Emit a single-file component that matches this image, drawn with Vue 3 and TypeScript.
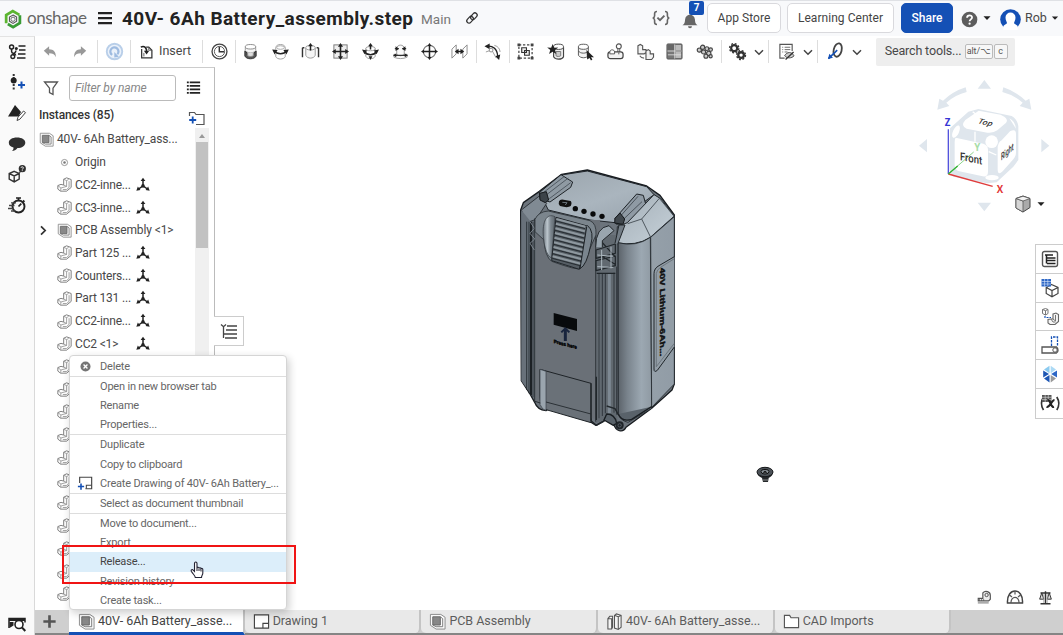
<script setup lang="ts">
import { h, type FunctionalComponent } from 'vue'

const glyphs: Record<string, string> = {
  logo: '<path d="M3 13.5V5.8L9.3 2l6.2 3.6" stroke="#5cb531" stroke-width="2.6"/><path d="M16 6v7.3l-6.4 3.9-5-3" stroke="#3a9b35" stroke-width="2.6"/><path d="m9.5 5.7 3.4 2v3.9l-3.4 2-3.4-2V7.7z" stroke="#555" stroke-width="1"/><circle cx="9.5" cy="9.7" r="2" stroke="#666" stroke-width=".9"/>',
  menu: '<path d="M2 4.2h14M2 9.2h14M2 14.2h14" stroke="#222" stroke-width="2.2"/>',
  link: '<g transform="rotate(-48 9 9)" stroke="#333" stroke-width="1.4"><rect x="1.800" y="6.200" width="8.500" height="5" rx="2.500"/><rect x="7.600" y="6.800" width="8.500" height="5" rx="2.500"/></g>',
  braces: '<path d="M5 2.5c-2 0-2.4.7-2.4 2.2v2.1c0 1.4-.5 1.9-1.8 2.2 1.3.3 1.8.8 1.8 2.2v2.1c0 1.5.4 2.2 2.4 2.2M13 2.5c2 0 2.4.7 2.4 2.2v2.1c0 1.4.5 1.9 1.8 2.2-1.3.3-1.8.8-1.8 2.2v2.1c0 1.5-.4 2.2-2.4 2.2" stroke="#666" stroke-width="1.6"/><path d="m5.4 8.6 2.6 2.6 4.4-4.6" stroke="#666" stroke-width="1.9"/>',
  bell: '<path d="M1.500 14.200c2.600-1.500 2.300-3.600 2.600-6C4.500 5.300 6.500 3.700 9 3.700s4.500 1.600 4.900 4.500c.3 2.400 0 4.500 2.600 6z" fill="#666"/><path d="M7 15.200h4a2 2 0 0 1-4 0z" fill="#666"/>',
  help: '<circle cx="9" cy="9" r="8.300" fill="#5d5d5d"/><path d="M6.400 7.200C6.400 3.600 11.800 3.800 11.700 7c0 1.900-2.600 1.900-2.600 3.900" stroke="#fff" stroke-width="1.900"/><circle cx="9.100" cy="13.400" r="1.200" fill="#fff"/>',
  user: '<circle cx="10.500" cy="10.500" r="10.300" fill="#1450b5"/><path d="M5.500 8.500a5 5 0 0 1 10 0c0 3-1.500 4.500-1.500 5.700 1 1.300 3.300 1.700 3.700 3v4.300H3.300v-4.300c.4-1.300 2.700-1.700 3.700-3C7 13 5.500 11.500 5.500 8.500z" fill="#fff"/>',
  caret: '<path d="M5.500 7.200h7L9 10.900z" fill="#222"/>',
  chevron: '<path d="m5 7.200 4 4 4-4" stroke="#444" stroke-width="1.500"/>',
  right: '<path d="m6 4 5 5-5 5" stroke="#333" stroke-width="2.100"/>',
  versions: '<circle cx="3.600" cy="4" r="2" stroke="#222" stroke-width="1.500"/><path d="M3.600 6v2.500c0 3 4 .8 4 4M8 7.500c-.3 3-2.500 2-3 4.500" stroke="#222" stroke-width="1.500"/><circle cx="8.300" cy="5.500" r="1.500" fill="#222"/><circle cx="4.800" cy="13.600" r="1.900" stroke="#222" stroke-width="1.400"/><path d="M10.500 3h7M11 7h6.500M10 11h7.500M9 15h8.500" stroke="#222" stroke-width="1.600"/>',
  addnode: '<path d="M5.700 0v2M5.700 3v1M5.700 10v7" stroke="#333" stroke-width="2" stroke-dasharray="2 1.500"/><circle cx="5.700" cy="6.500" r="3" fill="#222"/><path d="M13.500 7.500v7M10 11h7" stroke="#1450b5" stroke-width="2"/>',
  tripencil: '<path d="M7 1 0 12.500h10.500L13 8z" fill="#222"/><path d="m9 16.500 1-3.300L15.500 7l2 1.600-5.600 6.600z" fill="#fff" stroke="#444"/>',
  bubble: '<path d="M9 2.500c5 0 8.300 2.200 8.300 5.200S14 13 9.500 13c-1.300 2-3.500 3-5.500 3 1.100-1 1.600-2.200 1.500-3.600C2.500 11.600.8 10.100.8 7.700.8 4.700 4 2.500 9 2.500z" fill="#303030"/>',
  cubehelp: '<path d="m6.200 6.300 5 2.200v5.600l-5 2.800-5-2.800V8.500zM1.200 8.500l5 2.400 5-2.400M6.200 11v5.900" stroke="#333" stroke-width="1.400"/><path d="m11 7.500 2-1" stroke="#333" stroke-width="1.200"/><circle cx="14.300" cy="3.700" r="3.600" fill="#303030"/><path d="M13 2.900c.2-1.600 2.600-1.300 2.400.1-.2.800-1 .7-1.100 1.600M14.300 5.300v.8" stroke="#fff" stroke-width=".9"/>',
  stopwatch: '<circle cx="10.500" cy="10.500" r="6" stroke="#222" stroke-width="1.900"/><path d="M8 2h5M10.500 2v2.500M15 4.500l1.500 1.300M10.500 10.500l2.800-2.800" stroke="#222" stroke-width="1.700"/><path d="M3 6.800h5M1 9.500h5.500M0 12.500h6M3 15h4" stroke="#444" stroke-width="1.300"/>',
  camera: '<path d="M1 14V4.500h16v4" stroke="#222" stroke-width="1.500"/><path d="M1 4.500h16V7H1z" fill="#222"/><path d="M1.500 8h4v3.500L1.500 14z" fill="#222"/><circle cx="11" cy="10.500" r="4" fill="#fff" stroke="#222" stroke-width="1.600"/><path d="m14 13.500 3.300 3.500" stroke="#222" stroke-width="2"/>',
  undo: '<path d="M2 7.700 8 2.500V6c5 .1 7.700 2.800 7.600 8.800-1.500-3.300-3.700-4.300-7.600-4.300v2.800z" fill="#999"/>',
  redo: '<path d="M16 7.700 10 2.500V6c-5 .1-7.700 2.800-7.600 8.800 1.500-3.300 3.700-4.300 7.600-4.300v2.800z" fill="#999"/>',
  update: '<circle cx="9" cy="9" r="8.200" fill="#eaf1fa" stroke="#b9cfe9" stroke-width="2"/><path d="M6.500 12.600A4.300 4.300 0 1 1 12 12" stroke="#9ebbe0" stroke-width="2.400"/><path d="M8.800 9.500v5.800l4.700-.8z" fill="#9ebbe0"/>',
  insert: '<path d="M3 5.500v10h11.500V7L11 3.500H8" stroke="#333" stroke-width="1.400"/><path d="M11 3.500V7h3.500M5.500 10v4" stroke="#555"/><path d="M2 3.500c4-2 6.500.5 6.500 5" stroke="#222" stroke-width="1.700"/><path d="M5.500 7.500h6l-3 4.300z" fill="#222"/>',
  mategroup: '<circle cx="9" cy="9" r="7.900" stroke="#444" stroke-width="1.400"/><circle cx="9" cy="9" r="5.400" stroke="#555"/><path d="M8.800 4v5.200H14" stroke="#333" stroke-width="1.500"/>',
  fasten: '<path d="M3.500 4v4c1.200 3 9.800 3 11 0V4" fill="#f4f4f4" stroke="#999"/><ellipse cx="9" cy="4" rx="5.500" ry="2.400" fill="#fff" stroke="#888"/><path d="M3 8.500v5.200c1.500 4 10.500 4 12 0V8.500l-2.500 2.200v2H5.500v-2z" fill="#555" stroke="#333"/><path d="M6 10v3.500c1.500 1 4.500 1 6 0V10" fill="#ddd" stroke="#888"/>',
  revolute: '<path d="M4 7V5c0-4.500 10-4.500 10 0v2M4 11.500v3c1.500 3.300 8.500 3.300 10 0v-3" stroke="#999"/><ellipse cx="9" cy="4.800" rx="4" ry="1.900" stroke="#aaa"/><path d="M2.500 8.500c3 3.800 10 3.800 13 0" stroke="#222" stroke-width="1.700"/><path d="M6 7.500.2 7l2.600 5.200zM12 7.500l5.800-.5-2.600 5.200z" fill="#222"/>',
  slider: '<path d="M4 5v8c1.500 4 8.500 4 10 0V5" fill="#f6f6f6" stroke="#999"/><ellipse cx="9" cy="5" rx="5" ry="2.300" fill="#fff" stroke="#999"/><path d="M.5 5v10M17.500 5v10M2.500 5h-2M17.500 5h-2" stroke="#333" stroke-width="1.500"/><path d="M9 8V2" stroke="#222" stroke-width="1.600"/><path d="m6.500 3.500 2.500-3.500 2.500 3.500z" fill="#222"/>',
  planar: '<rect x="2" y="2" width="14" height="14" fill="#eee" stroke="#777"/><path d="M9 2v14M2 9h14" stroke="#222" stroke-width="1.700"/><path d="m9 0 2.700 4H6.300zm0 18-2.700-4h5.400zM0 9l4-2.700v5.400zm18 0-4 2.700V6.300z" fill="#222"/>',
  cylindrical: '<path d="M4 6v8c1.500 3.500 8.500 3.500 10 0V6" stroke="#999"/><ellipse cx="9" cy="6" rx="5" ry="2.200" stroke="#999"/><path d="M2.500 9c3 4.500 10 4.500 13 0M9 2v5" stroke="#222" stroke-width="1.600"/><path d="M5.500 8 0 7l2.600 5zM12.500 8l5.500-1-2.600 5zM6.500 3.500 9 0l2.500 3.500zM7 14h4l-2 4z" fill="#222"/>',
  pinslot: '<path d="M5 13V6c0-5 8-5 8 0v7M2 12h3c2 2 6 2 8 0h3v3c-3 2-11 2-14 0z" fill="#fafafa" stroke="#999"/><path d="M3 6h4M11 6h4M3 13h12" stroke="#333" stroke-width="1.300"/><path d="m7.500 6-3.700-2.500v5zM10.500 6l3.700-2.500v5zM1 13l3.500-2v4zm16 0-3.500-2v4z" fill="#222"/>',
  ball: '<circle cx="9" cy="9" r="6.500" stroke="#777" stroke-width="1.200"/><path d="M9 2v14M2 9h14" stroke="#222" stroke-width="1.600"/><path d="m9 0 2.200 3.200H6.800zm0 18-2.200-3.200h4.400zM0 9l3.200-2.200v4.400zm18 0-3.200 2.200V6.800z" fill="#222"/>',
  parallel: '<path d="M1 6.500 5.500 2v9.500L1 16zM12.500 6.500 17 2v9.500L12.500 16z" stroke="#888"/><path d="M5.500 9h7" stroke="#222" stroke-width="1.500"/><path d="m4 9 4-2.800v5.600zm10 0-4-2.800v5.600z" fill="#222"/>',
  tangent: '<path d="M3 3.500C9 2.500 14 6 14.500 14" stroke="#222" stroke-width="1.400"/><path d="M.5 3.500 6 .5v6zM16 18l1.200-5.700-5.400 1.700z" fill="#222"/><path d="M2 9.500 9 7M8 7l5 9M11 2.500c4 1 6 4 6 7" stroke="#999"/><circle cx="7.500" cy="7.500" r="2" fill="#fff" stroke="#888"/>',
  group: '<rect x="2" y="2" width="14" height="14" stroke="#444" stroke-width="1.300" stroke-dasharray="2.500 1.800"/><path d="M.500.500h3v3h-3zM14.500.500h3v3h-3zM.500 14.500h3v3h-3zM14.500 14.500h3v3h-3z" fill="#444"/><path d="M5 5h5v5H5zM8 8h5v5H8z" fill="#eee" stroke="#333" stroke-width="1.200"/>',
  starcube: '<path d="M7 4.500v10c2 3.500 9 3.500 10.500 0v-10" fill="#eee" stroke="#444" stroke-width="1.200"/><ellipse cx="12.200" cy="4" rx="5.300" ry="2.800" fill="#fff" stroke="#444"/><path d="M9.500 9h5v4.500c-1 1-4 1-5 0z" fill="#ccc" stroke="#777"/><path d="m6 1 1.600 3.900 4.200-.1-3.300 2.700 1.300 4.200L6 9.200l-3.800 2.500 1.300-4.200L.2 4.800l4.200.1z" fill="#222"/>',
  pickcube: '<path d="M1.500 4v9c2 3.500 9 3.500 10.500 0V4M1.500 8.500c2 3 8.500 3 10.500 0" fill="#f2f2f2" stroke="#555"/><ellipse cx="6.800" cy="4" rx="5.300" ry="2.700" fill="#fff" stroke="#555"/><path d="m10 7.500 8 7.500-3.200.1 1.500 2.500-1.500.9-1.500-2.700-2.500 1.700z" fill="#222"/>',
  snap: '<circle cx="12.500" cy="3.500" r="2.600" stroke="#555" stroke-width="1.200"/><path d="M11.500 6v3.500M13.500 6v3.500" stroke="#555"/><rect x="1" y="9.500" width="16" height="7" rx="2.500" fill="#f2f2f2" stroke="#444" stroke-width="1.300"/><path d="M3 9.500c0-3 5-3 5 0v2H3z" fill="#fff" stroke="#555"/><path d="M12.500 10v2" stroke="#555"/>',
  replicate: '<path d="M1 3 3.500 1.500 6 3v4h3.500v3l-2 1.500H1zM9.500 8.500 12 7l2 1.500v3h3.500v3.500l-2 2.500h-6z" fill="#f2f2f2" stroke="#555" stroke-width="1.200"/><path d="M3 13.500c1 2 2.500 2.500 4.500 2.500" stroke="#666" stroke-width="1.200"/>',
  pattern: '<rect x="1" y="1" width="16" height="16" rx="1" fill="#777" stroke="#555"/><path d="M2 2h6.500v5.500H2z" fill="#666"/><path d="M10 2h6v5.500h-6zM10 9.500h6V16h-6z" fill="#bbb"/><path d="M1.500 8.500h15M9.200 1.500v15M2 12.500h14" stroke="#ddd" stroke-width=".9"/>',
  circular: '<g fill="#ccc" stroke="#444" stroke-width="1.200"><circle cx="3.500" cy="7.500" r="2.200"/><circle cx="7" cy="4.500" r="2.200"/><circle cx="11.500" cy="6" r="2"/><circle cx="15.500" cy="7" r="1.900"/><circle cx="8" cy="9.500" r="2.200"/><circle cx="13.500" cy="11" r="2.300"/><circle cx="10.500" cy="14" r="2.100"/><circle cx="15.500" cy="14" r="1.700"/></g>',
  gears: '<circle cx="5.500" cy="5.500" r="3.200" stroke="#333" stroke-width="2.400"/><circle cx="5.500" cy="5.500" r="4.900" stroke="#333" stroke-width="1.400" stroke-dasharray="2 1.850"/><circle cx="12.800" cy="12.800" r="3" stroke="#333" stroke-width="2.400"/><circle cx="12.800" cy="12.800" r="4.700" stroke="#333" stroke-width="1.400" stroke-dasharray="2 1.700"/>',
  hidden: '<path d="M7 16H2V1.500h13v7" stroke="#555" stroke-width="1.200"/><path d="M4.500 4.500h1M7 4.500h6M4.500 7h1M7 7h6M4.500 9.500h1M7 9.500h3" stroke="#666"/><path d="M7 13.500c2.500-4.500 7.500-4.500 10 0-2.500 3-7.500 3-10 0z" fill="#ccc" stroke="#444"/><path d="m8 17.500 8.500-8" stroke="#333" stroke-width="1.400"/>',
  section: '<ellipse cx="11.300" cy="7.500" rx="4.200" ry="7.200" transform="rotate(14 11.300 7.500)" stroke="#444" stroke-width="1.900"/><path d="M1.500 16.500 10.800 7.500" stroke="#1450b5" stroke-width="1.700"/><path d="m1 17 1.500-5.500 3.800 4z" fill="#1450b5"/>',
  filter: '<path d="M2.500 3h13L11 9.200v6.300l-3.500-2V9.200z" stroke="#555" stroke-width="1.300"/>',
  list: '<path d="M5 3.500h11M5 7.200h11M5 10.900h11M5 14.600h11M2 3.500h2M2 7.200h2M2 10.900h2M2 14.600h2" stroke="#222" stroke-width="1.800"/>',
  folderplus: '<path d="M2.500 7V3.500h5L9 5.500h8v10H9" stroke="#555" stroke-width="1.200"/><path d="M5.700 7.500v7M2.200 11h7" stroke="#1450b5" stroke-width="1.800"/>',
  assembly: '<path d="M1.500 1.500h11L17 4.500v12.500H7.500L1.500 13z" fill="#fafafa" stroke="#888"/><path d="M4 4h8v8.700H4z" fill="#888" stroke="#666"/><path d="M12 4 14.500 6v8.500H7.500L4 12.700" stroke="#777"/>',
  part: '<path d="M8 2.700 11.500 1 17 3v9.500L11.500 17H4.200L1 14.500V10.300L4.800 8.800l3.200.9z" fill="#fdfdfd" stroke="#777" stroke-width="1.100"/><path d="m8 2.700 3.500 1.600v7L8 9.700M11.500 11.300 4.700 13.200 1 10.300M11.500 4.300 14 3M4.700 13.200l-.3 3.500M14.500 5v7.500L11.500 15H7" stroke="#888" stroke-width=".9"/>',
  origin: '<circle cx="9" cy="9" r="3.700" stroke="#888"/><circle cx="9" cy="9" r="1.500" fill="#777"/>',
  mate: '<path d="M9 3v7l-5 3.500M9 10l5 3.500" stroke="#222" stroke-width="1.700"/><circle cx="9" cy="10" r="2" fill="#222"/><path d="m9 .8 2.700 3.700H6.300zM1.500 15.500l1.700-4.700 2.900 3.900zM16.500 15.500l-1.700-4.700-2.900 3.900z" fill="#222"/>',
  remove: '<circle cx="9" cy="9" r="8.200" fill="#757575"/><path d="m5.800 5.800 6.400 6.400m0-6.400-6.400 6.400" stroke="#fff" stroke-width="2.200"/>',
  drawplus: '<path d="M3 9V2.500h13.500v13H9.500" stroke="#444" stroke-width="1.300"/><path d="M10.500 15.500v-4h6" stroke="#444" stroke-width="1.200"/><path d="M4.500 9.500v7M1 13h7" stroke="#1450b5" stroke-width="1.800"/>',
  drawing: '<path d="M1.500 2h15v14h-15z" fill="#fff" stroke="#444" stroke-width="1.200"/><path d="M10.500 16v-5h6" stroke="#444" stroke-width="1.200"/>',
  parts: '<path d="m2 6 2-2.500h3V15l-1 2H2zM9 2.500 11 1l5 1.500V15l-3 2.500L9 16zM9 2.500l4 1.500v13.500M13 4l3-1.500M2 6h4v11" fill="#f4f4f4" stroke="#555" stroke-width="1.100"/>',
  folder: '<path d="M1.500 15.500v-13h5.500L8.500 5h8v10.500z" fill="#fff" stroke="#555" stroke-width="1.200"/>',
  tree: '<path d="m1 2.500 2.500 2.200L6 2.500M3.500 4v12M7 4h10M6 8h11M3.500 12H17M5 16h12" stroke="#444" stroke-width="1.300"/>',
  props: '<rect x="1.500" y="1.500" width="15" height="15" rx="2" stroke="#555" stroke-width="1.400"/><path d="M4 5h8M6 8h8.500M6 10.500h8.500M6 13.500h8.500M5.500 5v8.500" stroke="#222" stroke-width="1.500"/>',
  cubetable: '<path d="m10.500 5.500 6.500 3v6l-6 3.300-5.800-3.300V8.500zM5.200 8.500l5.800 3 6-3M11 11.500v6" stroke="#444" stroke-width="1.200"/><path d="M.5 0h9.500v7.500H.5z" fill="#2d67c6"/><path d="M.5 2.500H10M.5 5H10M3.600 0v7.500M6.800 0v7.500" stroke="#dfeafa" stroke-width=".6"/>',
  config: '<path d="m1.500 2.500 3-1 2.500 1v4L4.500 8l-3-1.500zM1.500 2.500l3 1.200L7 2.500M4.500 3.700V8" stroke="#777"/><path d="M4 9v1.500h6" stroke="#1450b5" stroke-width="1.200" stroke-dasharray="2 1"/><path d="m12 7 3-1 2.500 1.500v7L14 17.500H9L7 16v-3.500l3-.5h2z" fill="#f5f5f5" stroke="#666" stroke-width="1.100"/><path d="M12 12 14.500 14V8M10 12l2 3h2.500" stroke="#777"/>',
  exploded: '<path d="M1 11h14.500c2 1.500 2 5 0 6H1z" stroke="#555" stroke-width="1.300"/><circle cx="14" cy="14" r="2.200" stroke="#555"/><path d="M10.500 10V1h6v9" stroke="#1450b5" stroke-width="1.300" stroke-dasharray="2.500 1"/>',
  appearance: '<path d="M8.500.800v7.500L3 4.500z" fill="#8ccbf0"/><path d="M9.700.800v7.500L15 4.500z" fill="#acdaf5"/><path d="M2.200 5.500 8 9l-5.800 3.500zM3 13.500 8.500 10v7.500z" fill="#1d56b4"/><path d="M16 5.500 10.200 9l5.800 3.500z" fill="#2d67c6"/><path d="m15 13.500-5.300-3.500v7.500z" fill="#999"/>',
  variables: '<path d="M2.500 3C0 7 0 12 2.500 16M15.800 3c2.500 4 2.500 9 0 13" stroke="#333" stroke-width="1.700"/><path d="M1 1h9.500v7H1z" fill="#555"/><path d="M1 3.300h9.500M1 5.600h9.500M4.200 1v7M7.300 1v7" stroke="#ddd" stroke-width=".6"/><path d="M6.500 6c3-1 3 8 6.500 7M13.500 6c-3 0-4.500 8-8 7" stroke="#222" stroke-width="2.100"/>',
  tape: '<path d="M7 3.500c3-3.500 9-1.500 9 3V11l-2 2H1.500v-3H7z" fill="#eee" stroke="#555" stroke-width="1.400"/><circle cx="11.500" cy="6" r="2" stroke="#555" stroke-width="1.200"/><path d="M1 15.500h13M3 13v-2M5.500 13v-2M8 13v-2" stroke="#555"/>',
  protractor: '<path d="M1.500 15c-1-16 16-16 15 0z" stroke="#444" stroke-width="1.500"/><path d="M5 15c-.5-7.500 8.500-7.500 8 0M9 3.500v3M3.500 7l2.500 2M14.500 7 12 9" stroke="#555" stroke-width="1.200"/>',
  scales: '<path d="M9 1.500V16M3 3.500h12M3 16.500h12" stroke="#333" stroke-width="1.700"/><path d="M4.500 3.500 2 11h5zM13.500 3.500 11 11h5z" fill="#ddd" stroke="#333" stroke-width="1.200"/><path d="M7 15.500V5M11 15.500V5" stroke="#999"/>',
  shaded: '<path d="m9 1 7 2.500v9L9 17l-7-4V3.500z" fill="#aaa" stroke="#444"/><path d="M2 3.500 9 6v11l-7-4z" fill="#d5d5d5" stroke="#555" stroke-width=".8"/><path d="m2 3.500 7-2.300 7 2.300L9 6z" fill="#f3f3f3" stroke="#555" stroke-width=".8"/>',
  plus: '<path d="M9 2.500v13M2.500 9h13" stroke="#555" stroke-width="2.800"/>',
}

const Icon: FunctionalComponent<{ name: string; size?: number }> = (p) =>
  h('svg', {
    width: p.size ?? 18, height: p.size ?? 18,
    viewBox: p.name === 'user' ? '0 0 21 21' : '0 0 18 18',
    fill: 'none', 'aria-hidden': 'true',
    style: { display: 'block', flex: 'none', overflow: p.name === 'user' ? 'hidden' : 'visible' },
    innerHTML: glyphs[p.name],
  })
Icon.props = ['name', 'size']

const mates = ['fasten', 'revolute', 'slider', 'planar', 'cylindrical', 'pinslot', 'ball', 'parallel']
const tools = ['group', 'starcube', 'pickcube', 'snap', 'replicate', 'pattern', 'circular']
const rail = ['versions', 'addnode', 'tripencil', 'bubble', 'cubehelp', 'stopwatch']
const sideTabs = ['props', 'cubetable', 'config', 'exploded', 'appearance', 'variables']

interface Row { label: string; icon: string; level: number; mate?: boolean; open?: boolean }
const part = (label: string): Row => ({ label, icon: 'part', level: 1, mate: label !== '' })
const rows: Row[] = [
  { label: '40V- 6Ah Battery_ass...', icon: 'assembly', level: 0 },
  { label: 'Origin', icon: 'origin', level: 1 },
  part('CC2-inne...'), part('CC3-inne...'),
  { label: 'PCB Assembly <1>', icon: 'assembly', level: 1, open: true },
  part('Part 125 ...'), part('Counters...'), part('Part 131 ...'), part('CC2-inne...'), part('CC2 <1>'),
  ...Array.from({ length: 11 }, () => part('')),
]

interface Item { label: string; icon?: string; line?: boolean; hot?: boolean }
const menu: Item[] = [
  { label: 'Delete', icon: 'remove', line: true },
  { label: 'Open in new browser tab' },
  { label: 'Rename' },
  { label: 'Properties...', line: true },
  { label: 'Duplicate' },
  { label: 'Copy to clipboard' },
  { label: 'Create Drawing of 40V- 6Ah Battery_...', icon: 'drawplus', line: true },
  { label: 'Select as document thumbnail', line: true },
  { label: 'Move to document...' },
  { label: 'Export' },
  { label: 'Release...', hot: true },
  { label: 'Revision history' },
  { label: 'Create task...' },
]

const tabs = [
  { label: '40V- 6Ah Battery_asse...', icon: 'assembly', active: true },
  { label: 'Drawing 1', icon: 'drawing' },
  { label: 'PCB Assembly', icon: 'assembly' },
  { label: '40V- 6Ah Battery_asse...', icon: 'parts' },
  { label: 'CAD Imports', icon: 'folder' },
]
const ribs = [0, 1, 2, 3, 4, 5, 6, 7, 8]
</script>

<template>
  <div class="app">
    <header class="top">
      <Icon name="logo" :size="19" />
      <span class="brand">onshape</span>
      <Icon name="menu" class="burger" />
      <h1>40V- 6Ah Battery_assembly.step</h1>
      <span class="branch">Main</span>
      <Icon name="link" :size="16" />
      <span class="grow"></span>
      <Icon name="braces" />
      <span class="bell"><Icon name="bell" /><b>7</b></span>
      <button class="btn store">App Store</button>
      <button class="btn learn">Learning Center</button>
      <button class="btn share">Share</button>
      <Icon name="help" :size="17" class="help" /><Icon name="caret" />
      <Icon name="user" :size="21" class="avatar" />
      <span class="name">Rob</span><Icon name="caret" :size="16" />
    </header>

    <div class="body">
      <nav class="rail">
        <span v-for="r in rail" :key="r" class="railcell"><Icon :name="r" /></span>
        <span class="grow"></span>
        <span class="railcell last"><Icon name="camera" /></span>
      </nav>

      <div class="main">
        <div class="toolbar">
          <span class="cell"><Icon name="undo" :size="16" /></span>
          <span class="cell"><Icon name="redo" :size="16" /></span>
          <i class="sep s4"></i>
          <span class="cell"><Icon name="update" :size="17" /></span>
          <i class="sep"></i>
          <span class="insert"><Icon name="insert" :size="16" />Insert</span>
          <i class="sep s4"></i>
          <span class="cell"><Icon name="mategroup" :size="17" /></span>
          <i class="sep s2"></i>
          <div class="set"><Icon v-for="m in mates" :key="m" :name="m" :size="17" /></div>
          <i class="sep"></i>
          <span class="cell"><Icon name="tangent" :size="17" /></span>
          <i class="sep"></i>
          <div class="set"><Icon v-for="t in tools" :key="t" :name="t" :size="17" /></div>
          <i class="sep"></i>
          <span class="cell"><Icon name="gears" :size="17" /></span>
          <span class="drop"><Icon name="chevron" /></span>
          <i class="sep s7"></i>
          <span class="cell"><Icon name="hidden" :size="17" /></span>
          <span class="drop"><Icon name="chevron" /></span>
          <i class="sep s7"></i>
          <span class="cell"><Icon name="section" :size="17" /></span>
          <span class="drop"><Icon name="chevron" /></span>
          <div class="search">Search tools...<kbd>alt/⌥</kbd><kbd class="key">c</kbd></div>
        </div>

        <div class="work">
          <aside class="panel">
            <div class="filter">
              <Icon name="filter" />
              <div class="field">Filter by name</div>
              <Icon name="list" :size="17" />
            </div>
            <div class="heading"><strong>Instances (85)</strong><Icon name="folderplus" /></div>
            <div class="treewrap">
              <ul class="tree">
                <li v-for="(r, i) in rows" :key="i" :class="'l' + r.level">
                  <Icon v-if="r.open" name="right" :size="15" class="expand" />
                  <Icon :name="r.icon" :size="15" />
                  <span class="label" :class="{ wide: !r.mate }">{{ r.label }}</span>
                  <Icon v-if="r.mate" name="mate" :size="16" />
                </li>
              </ul>
              <div class="scroll"><span class="arrow"></span><span class="thumb"></span></div>
            </div>
          </aside>

          <main class="canvas">
            <div class="toggle"><Icon name="tree" /></div>

            <svg class="battery" viewBox="0 0 600 870" width="200" height="290" fill="none" stroke-linejoin="round">
              <defs>
                <linearGradient id="cyl"><stop offset="0" stop-color="#596067" /><stop offset=".3" stop-color="#7a848d" /><stop offset=".7" stop-color="#9ca8b2" /><stop offset="1" stop-color="#8f9aa3" /></linearGradient>
                <linearGradient id="side"><stop offset="0" stop-color="#95a0a9" /><stop offset="1" stop-color="#919ca6" /></linearGradient>
                <linearGradient id="lid" x2=".8" y2="1"><stop offset="0" stop-color="#9aa4ac" /><stop offset=".6" stop-color="#aab5be" /><stop offset="1" stop-color="#9ba6b0" /></linearGradient>
                <linearGradient id="latch"><stop offset="0" stop-color="#6b747c" /><stop offset=".35" stop-color="#bcc6cd" /><stop offset=".65" stop-color="#7b858d" /><stop offset="1" stop-color="#5f676e" /></linearGradient>
                <linearGradient id="shoulder" y2="1"><stop offset="0" stop-color="#a3aeb7" /><stop offset=".7" stop-color="#bcc7cf" /><stop offset="1" stop-color="#7d8790" /></linearGradient>
              </defs>
              <path d="M62 150 70 128 118 94 185 43 262 30 440 78 480 106 523 165V672L516 690 455 745 378 802Q372 815 358 812 345 808 340 790L320 778 288 796 275 788 272 775 150 742 138 752Q112 750 104 727L90 702 64 662Z" fill="#6c747c" stroke="#181c20" stroke-width="4" />
              <path d="M118 96 190 44 262 33 440 80 462 104 372 170 345 188 270 180 145 150Z" fill="url(#lid)" stroke="#20252a" stroke-width="3" />
              <path d="M64 150 118 108 140 130 108 178 80 188Z" fill="#808a93" stroke="#22272b" stroke-width="2.500" />
              <path d="M108 180H300V780L150 742 104 725Z" fill="#6a7077" />
              <path d="M64 150V662L90 700V182Z" fill="#68717a" />
              <path d="M80 185V690M87 185V700M99 185V712M104 175V727" stroke="#20262b" stroke-width="2.500" />
              <path d="M93 185V705" stroke="#1c2125" stroke-width="6" />
              <path d="M90 185 103 205 90 220 104 237 90 250 103 270" stroke="#8a949c" stroke-width="2.500" />
              <path d="M118 98 183 44 218 66 212 82 150 126 120 116Z" fill="#8f9aa3" stroke="#1e2327" stroke-width="3" />
              <path d="m130 98 62-48M140 104l65-50M148 116l64-48" stroke="#454d55" stroke-width="2.500" />
              <path d="m119 100 20-5 7 25-10 8-16-8Z" fill="#3c4349" stroke="#15181b" stroke-width="3" />
              <path d="m345 175 65-73 20 4 8 30-60 58-30-2Z" fill="#8f9aa4" stroke="#1d2226" stroke-width="3" />
              <path d="m360 170 54-61M368 180l58-55M385 188l50-45" stroke="#3d454c" stroke-width="2.500" />
              <path d="m345 175 15-16 14 18-5 16-25-4Z" fill="#40474d" stroke="#14181b" stroke-width="3" />
              <path d="M382 188 462 104 482 116 523 168 451 232Q408 260 350 248L352 200Z" fill="url(#shoulder)" stroke="#242a2f" stroke-width="3" />
              <path d="m452 232-27-55 53-62M425 177l-42 14M478 115l45 55" stroke="#3a4249" stroke-width="2.500" />
              <path d="M352 248Q410 262 451 232L455 745 384 787Q362 782 354 762Z" fill="url(#cyl)" stroke="#23292e" stroke-width="2.500" />
              <path d="M452 232 523 170V672L455 742Z" fill="url(#side)" stroke="#23292e" stroke-width="2.500" />
              <path d="m523 290-46 27q-15 8-15 24v286q0 12 10 4l51-70" fill="#929da6" stroke="#20262b" stroke-width="3" />
              <path d="M469 340v280l54-70M469 340q2-12 14-19l40-25" stroke="#59626a" stroke-width="2" />
              <path d="M286 225H352V795L320 778 286 790Z" fill="#616970" />
              <path d="M287 225V785M307 340V768M316 340V760M342 338V758M350 320V764M355 250V760" stroke="#262c31" stroke-width="2.500" />
              <path d="M328 340V760" stroke="#7e8993" stroke-width="9" />
              <path d="M297 340V775" stroke="#484f56" stroke-width="5" />
              <path d="m288 270 58-18v28l-58 15zM288 302l58-14v29l-58 15zM290 340h56M300 240l45 50M300 285l45 28" stroke="#20262a" stroke-width="3.500" />
              <path d="m292 285 48 4M292 320l48 2M305 270v60M333 260v65" stroke="#aeb9c1" stroke-width="3" />
              <path d="M105 215V178Q115 155 145 153L270 182Q290 190 288 225L270 265 240 325Q232 332 155 304 135 290 132 240Z" fill="#7b858d" stroke="#2b3136" stroke-width="2.500" />
              <path d="M130 230C126 185 140 158 165 170L155 295Q135 285 130 230Z" fill="url(#latch)" stroke="#333a40" stroke-width="2" />
              <path d="M168 172 262 198 238 328 155 302Z" fill="#555d64" stroke="#20252a" stroke-width="3" />
              <g v-for="n in ribs" :key="n" :transform="`translate(${-n * 1.4} ${n * 14})`">
                <path d="m169 177 87 23" stroke="#8e989f" stroke-width="6" />
                <path d="m168 183 87 23" stroke="#252b30" stroke-width="3" />
              </g>
              <path d="M262 196q22 18 10 60-12 60-32 70l20-125" fill="#7a858e" stroke="#1f2428" stroke-width="3" />
              <path d="M287 262q0-60 40-65l15 15-35 30v20" fill="#99a5ae" stroke="#22272b" stroke-width="3" />
              <path d="m345 250 12-55 18 0-22 58" fill="#737d86" stroke="#22272b" stroke-width="3" />
              <path d="M177 124q3-8 18-4l17 3q5 6 0 15-8 7-32 0-6-6-3-14z" fill="#111" />
              <path d="m187 127 14 1-5 7" stroke="#6a747c" stroke-width="3" />
              <g fill="#090a0b"><circle cx="226" cy="146" r="8" /><circle cx="252" cy="154" r="8" /><circle cx="279" cy="162" r="8" /><circle cx="306" cy="169" r="8" /></g>
              <path d="m161 459 70 18v36l-70-19z" fill="#080a0c" />
              <path d="M196 543v-34" stroke="#18243d" stroke-width="9" /><path d="m184 517 12-12 12 12" stroke="#18243d" stroke-width="6" />
              <text x="0" y="0" transform="matrix(1 .26 0 1 161 549)" fill="#08090a" stroke="#08090a" stroke-width="1.500" class="press" textLength="69" lengthAdjust="spacingAndGlyphs">Press here</text>
              <path d="m120 628 153 42v118L135 748Q120 735 120 710Z" fill="#6a7178" stroke="#1e2327" stroke-width="3" />
              <path d="M120 628v105q7 18 18 18V634z" fill="#9aa5ae" stroke="#333b42" stroke-width="2" />
              <path d="m138 726 135 36M105 724l16 5" stroke="#2b3136" stroke-width="3" />
              <path d="M273 670v112l16 14 22-12 9-18M289 650v130M320 738l25 8 10 18" stroke="#21272b" stroke-width="4" />
              <path d="M320 762q25 0 30 28l-10 6-28-16zM355 762q10 25 40 16l60-38" fill="#59626a" stroke="#191e22" stroke-width="4" />
              <circle cx="359" cy="796" r="12" fill="#20252a" /><circle cx="359" cy="796" r="5" stroke="#68727b" stroke-width="2" />
              <text transform="matrix(0 1 -.85 .2 479 325)" class="litho" textLength="265" lengthAdjust="spacingAndGlyphs">40V Lithium-6Ah...</text>
            </svg>

            <svg class="screw" viewBox="0 0 20 18" width="20" height="18">
              <path d="M2 6.500q0 3 5 5.500l1 4h5l.7-4q4.300-2.500 4.300-5.500z" fill="#25282b" />
              <ellipse cx="10" cy="6" rx="8" ry="4.700" fill="#4b5157" stroke="#16181a" />
              <ellipse cx="10" cy="5.700" rx="4" ry="2.300" fill="#8d969d" stroke="#111" /><path d="M7.500 6.700 10 4.500l2.500 2.200z" fill="#111" />
              <path d="M8 14h5" stroke="#aaa" stroke-width=".8" />
            </svg>

            <svg class="cube" viewBox="0 0 450 450" width="150" height="150" fill="none">
              <g fill="#dfe6ed">
                <path d="m253 30 20 26h-40zM253 424l20-26h-40zM57 227l24-20v40zM448 227l-24-20v40z" />
                <path d="m197 52 3 14q-33 8-61 32l9 10-36 11 6-33 11 6q30-28 68-40zM310 52l-3 14q33 8 61 32l-9 10 35 11-6-33-11 6q-30-28-67-40z" />
                <path d="M235 117 335 138Q352 148 355 168V270L340 290 290 337 262 340 160 320Q147 313 148 292L150 175 205 125Z" />
              </g>
              <path d="M236 122 302 134Q332 148 314 162L292 181Q280 190 262 188L200 176Q180 168 196 150Z" fill="#fff" />
              <path d="m167 203 83 18q14 4 14 18v66q0 17-16 14l-70-15q-14-4-14-18v-70q0-11 3-13zM293 235q0-17 12-24l25-27q18-10 18 8v55q0 14-12 25l-28 32q-15 14-15-6zM328 145q17 8 20 31z" fill="#fff" />
              <circle cx="275" cy="215" r="19" fill="#fff" /><ellipse cx="168" cy="185" rx="9" ry="20" transform="rotate(25 168 185)" fill="#fff" /><ellipse cx="276" cy="323" rx="20" ry="8" fill="#fff" />
              <path d="M225 185v30M266 245l23 10M218 125l10 8" stroke="#fff" stroke-width="4" />
              <path d="M145 312V178" stroke="#5454dd" stroke-width="4" /><path d="m145 312 133 37" stroke="#df3c3c" stroke-width="4" />
              <path d="m145 312 76-66" stroke="#8bd48b" stroke-width="3" /><path d="m145 312 28-24" stroke="#32b332" stroke-width="4" />
              <g class="axes"><text x="134" y="167" fill="#3636d5">Z</text><text x="290" y="369" fill="#e23535">X</text><text x="223" y="244" fill="#a7dda7">Y</text></g>
              <g class="faces"><text transform="matrix(.82 .16 -.42 .66 231 160)">Top</text><text transform="matrix(.92 .19 0 1.080 180 270)">Front</text><text transform="matrix(.52 -.46 0 1 303 272)">Right</text></g>
            </svg>
            <div class="shade"><Icon name="shaded" /><Icon name="caret" /></div>
            <div class="sidetabs"><span v-for="s in sideTabs" :key="s"><Icon :name="s" /></span></div>
            <div class="measure"><Icon name="tape" :size="15" /><Icon name="protractor" /><Icon name="scales" :size="15" /></div>
          </main>
        </div>

        <footer class="tabs">
          <span class="add"><Icon name="plus" :size="17" /></span>
          <span v-for="(t, i) in tabs" :key="i" class="tab" :class="{ active: t.active }"><Icon :name="t.icon" :size="17" />{{ t.label }}</span>
        </footer>
      </div>
    </div>

    <div class="menu">
      <div v-for="m in menu" :key="m.label" class="item" :class="{ line: m.line, hot: m.hot }">
        <span class="slot"><Icon v-if="m.icon" :name="m.icon" :size="m.icon === 'remove' ? 11 : 16" /></span>{{ m.label }}
      </div>
    </div>
    <div class="highlight"></div>
    <svg class="hand" viewBox="0 0 14 18" width="14" height="18">
      <path d="M4.500 10.500V2.500c0-2 2.500-2 2.500 0V7c.3-1.100 2-.9 2 .3.400-1 2-.6 2 .5.600-.8 1.800-.4 1.800.7v3.800c0 1.500-1.300 2.200-1.300 4.200H5.300c0-1.600-2.200-3.300-4-6.300-.6-1.600 1-2.200 1.900-1z" fill="#fff" stroke="#223" stroke-width="1.100" />
      <path d="M7 7v3M9 7.500v2.500M11 8.500v2" stroke="#223" />
    </svg>
  </div>
</template>

<style>
body { margin: 0; overflow: hidden; background: #fff; }
</style>

<style scoped>
.app { position: relative; width: 1063px; height: 635px; overflow: hidden; display: flex; flex-direction: column; background: #fff; color: #484848; font: 12px/1 Roboto, "Noto Sans", sans-serif; }
.app * { box-sizing: border-box; }
.grow { flex: 1; }
.top { height: 36px; flex: none; display: flex; align-items: center; background: #f8f9fb; border-top: 1px solid #dfe1e5; padding: 0 0 1px 3px; white-space: nowrap; }
.brand { width: 60px; margin-left: 5px; font: 400 17px/20px Lato, sans-serif; letter-spacing: -.5px; color: #666; }
.burger { margin-left: 9px; }
h1 { margin: 0 0 0 8px; width: 292px; font-size: 19px; font-weight: 700; letter-spacing: .45px; color: #222; }
.branch { width: 43px; margin: 4px 0 0 7px; font-size: 13.500px; color: #777; }
.bell { position: relative; margin: 4px 8px 0 11px; }
.bell b { position: absolute; left: 8px; top: -10px; width: 15px; height: 14px; border-radius: 2px; background: #1450b5; color: #fff; font: 700 10px/14px Roboto, sans-serif; text-align: center; }
.btn { height: 30px; margin: 0; padding: 0; border: 1px solid #d9d9dd; border-radius: 5px; background: #fff; color: #444; font: 12px/1 Roboto, sans-serif; letter-spacing: .05px; }
.store { width: 74px; margin-right: 6px; }
.learn { width: 107px; margin-right: 7px; }
.share { width: 52px; margin-right: 8px; border-color: #1450b5; background: #1450b5; color: #fff; font-weight: 500; }
.help { margin-top: 2px; }
.avatar { margin: 3px 0 0 4px; }
.name { margin-left: 4px; width: 22px; font-size: 12.500px; }
.body { flex: 1; min-height: 0; display: flex; }
.rail { width: 35px; flex: none; display: flex; flex-direction: column; background: #fafafa; border-right: 1px solid #d9d9d9; border-top: 1px solid #e3e3e3; }
.railcell { height: 30.500px; display: flex; align-items: center; justify-content: center; }
.railcell.last { height: 24px; }
.main { flex: 1; min-width: 0; display: flex; flex-direction: column; }
.toolbar { height: 31px; flex: none; display: flex; align-items: center; }
.cell { width: 30px; flex: none; display: flex; justify-content: center; }
.sep { width: 3px; flex: none; height: 23px; display: flex; background: linear-gradient(#ddd, #ddd) center / 1px 100% no-repeat; }
.s4 { width: 4px; } .s2 { width: 2px; } .s7 { width: 7px; }
.set { display: flex; }
.set > svg { margin: 0 6.430px; }
.insert { width: 68px; display: flex; align-items: center; gap: 4px; padding-left: 7px; font-size: 12.500px; }
.drop { width: 12px; display: flex; justify-content: center; }
.drop > svg { flex: none; }
.search { width: 139px; height: 28px; margin-left: 13px; display: flex; align-items: center; padding-left: 9px; background: #eee; border-radius: 2px; font-size: 12.500px; letter-spacing: -.15px; white-space: nowrap; }
kbd { width: 28px; height: 15px; padding: 0; margin-left: 3px; border: 1px solid #bbb; border-radius: 2px; background: #f7f7f7; color: #555; font: 9px/13px Roboto, "DejaVu Sans", sans-serif; text-align: center; }
.key { width: 14px; margin-left: 1px; }
.work { flex: 1; min-height: 0; display: flex; }
.panel { width: 180px; flex: none; display: flex; flex-direction: column; border-top: 1px solid #ccc; border-right: 1px solid #bbb; }
.filter { height: 37px; display: flex; align-items: center; padding: 2px 0 0 7px; }
.field { width: 107px; height: 26px; margin: 0 9px 0 9px; padding-left: 5px; border: 1px solid #bbb; border-radius: 3px; font: italic 12px/24px Roboto, sans-serif; letter-spacing: -.1px; color: #888; }
.heading { height: 22px; padding: 0 9px 0 4px; margin-bottom: 1px; display: flex; align-items: center; justify-content: space-between; color: #333; }
.heading svg { margin-top: 3px; }
.heading strong { margin-bottom: 3px; font-weight: 500; font-size: 12px; letter-spacing: -.15px; }
.treewrap { height: 482px; overflow: hidden; display: flex; justify-content: space-between; }
.tree { list-style: none; margin: 0; padding: 0; width: 158px; }
.tree li { height: 22.730px; display: flex; align-items: center; position: relative; white-space: nowrap; }
.l0 { padding-left: 4px; } .l1 { padding-left: 22px; }
.expand { margin: 0 -1px 0 -21px; padding-right: 7px; box-sizing: content-box !important; }
.label { width: 63px; padding-left: 3px; font-size: 12px; letter-spacing: -.17px; }
.label.wide { width: 130px; letter-spacing: -.12px; }
.scroll { width: 14px; margin-right: 5px; background: #f0f0f0; }
.arrow { display: block; width: 0; margin: 6px auto 4px; border: 3px solid transparent; border-top: 0; border-bottom: 4px solid #999; }
.thumb { display: block; height: 106px; margin: 0 1px; background: #c2c2c2; }
.canvas { flex: 1; position: relative; }
.toggle { position: absolute; left: -1px; top: 249px; width: 30px; height: 30px; display: flex; align-items: center; justify-content: center; border: 1px solid #ccc; border-left: 0; background: #fff; }
.battery { position: absolute; left: 285px; top: 93px; }
.press { font: 700 15px "Liberation Sans", sans-serif; }
.litho { font: 700 25px "Liberation Sans", sans-serif; fill: #111; stroke: #111; stroke-width: 1.500px; }
.screw { position: absolute; left: 540px; top: 399px; }
.cube { position: absolute; left: 685px; top: 3px; }
.axes { font: 700 29px "Open Sans", sans-serif; }
.faces { font: 500 31px Roboto, sans-serif; fill: #333; }
.shade { position: absolute; left: 799px; top: 128px; display: flex; }
.sidetabs { position: absolute; right: 0; top: 177px; width: 28px; border: 1px solid #ccc; border-right: 0; background: #fff; }
.sidetabs span { height: 28.800px; display: flex; align-items: center; justify-content: center; border-bottom: 1px solid #ccc; }
.sidetabs span:last-child { border-bottom: 0; }
.measure { position: absolute; left: 762px; bottom: 4px; display: flex; align-items: center; gap: 14px; }
.tabs { height: 25px; flex: none; display: flex; align-items: flex-start; background: #cfcfcf; border-bottom: 2px solid #858585; }
.add { width: 34px; height: 23px; display: flex; align-items: center; justify-content: center; padding-right: 5px; }
.tab { width: 176.700px; height: 23px; flex: none; display: flex; align-items: center; gap: 3px; padding-left: 8px; border-right: 2px solid #c4c4c4; border-radius: 0 0 5px 5px; background: #e9e9e9; font-size: 12.500px; letter-spacing: -.03px; color: #5c5c5c; }
.tab.active { width: 175.700px; padding-left: 9px; height: 25px; border-radius: 0; background: #fff; border-bottom: 3px solid #1450b5; color: #444; }
.menu { position: absolute; left: 69px; top: 355px; width: 218px; height: 255px; padding-top: .5px; border: 1px solid #d5d5d5; border-radius: 4px; background: #fff; box-shadow: 2px 3px 8px #0003; color: #666; }
.item { height: 19.200px; display: flex; align-items: center; font-size: 11px; letter-spacing: -.19px; white-space: nowrap; }
.item.line { height: 20.200px; border-bottom: 1px solid #ddd; }
.item.hot { background: #dceefa; color: #444; }
.slot { width: 30px; flex: none; display: flex; justify-content: center; }
.highlight { position: absolute; left: 62px; top: 545px; width: 234px; height: 39px; border: 2px solid #f01414; }
.hand { position: absolute; left: 190px; top: 561px; }
</style>
